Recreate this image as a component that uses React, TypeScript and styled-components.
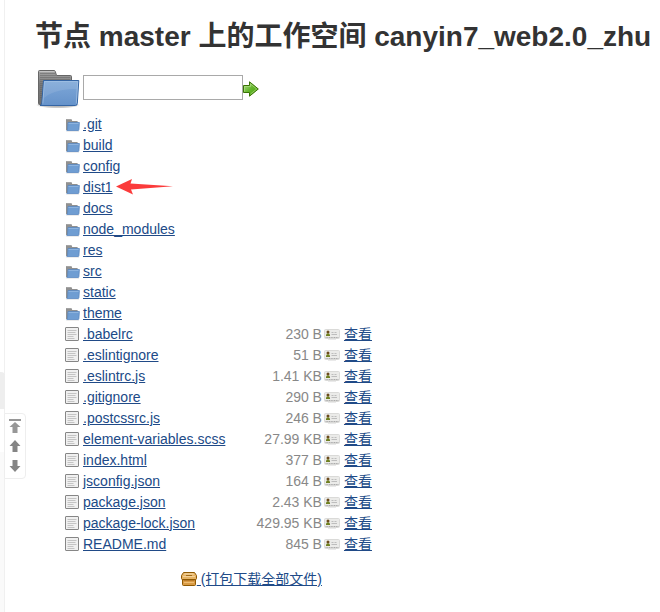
import React from "react";
import styled, { createGlobalStyle } from "styled-components";

const GlobalStyle = createGlobalStyle`
  *, *::before, *::after { box-sizing: border-box; }
  body {
    margin: 0;
    background: #fff;
    color: #333;
    font: 14px/20px "Liberation Sans", Arial, "Noto Sans CJK SC", sans-serif;
  }
`;

const Page = styled.div`
  display: flex;
  min-height: 100vh;
`;

const Rail = styled.aside`
  position: relative;
  flex: none;
  display: flex;
  flex-direction: column;
  width: 5px;
  padding-top: 372px;
  border-right: 1px solid #f0f0f0;
`;

const RailHandle = styled.div`
  height: 37px;
  margin-right: -1px;
  border-radius: 0 4px 0 0;
  background: #eee;
`;

const RailTrack = styled.div`
  flex: 1;
  margin-top: 43px;
  background: #fafafa;
`;

const ScrollDock = styled.nav`
  position: absolute;
  top: 413px;
  left: 4px;
  display: flex;
  flex-direction: column;
  align-items: center;
  width: 22px;
  padding: 2px 0;
  border: 1px solid #eee;
  border-radius: 0 4px 4px 0;
  background: #fff;
`;

const DockButton = styled.button`
  display: grid;
  place-items: center;
  width: 20px;
  height: 20px;
  padding: 0;
  border: 0;
  background: none;
  color: #858585;
`;

const Main = styled.main`
  flex: 1;
  min-width: 0;
  padding: 17px 0 22px 30px;
`;

const Title = styled.h1`
  margin: 0;
  font-size: 28px;
  line-height: 40px;
  font-weight: 700;
  white-space: nowrap;
`;

const PathForm = styled.form`
  display: flex;
  align-items: flex-start;
  margin-top: 7px;
  height: 48px;
`;

const PathInput = styled.input`
  width: 160px;
  height: 25px;
  margin: 11px 0 0;
  border: 1px solid #a9a9a9;
  padding: 1px 2px;
  font: inherit;
`;

const GoButton = styled.button`
  display: flex;
  margin: 17px 0 0;
  padding: 0;
  border: 0;
  background: none;
`;

const FileTable = styled.table`
  margin: 1px 0 0 30px;
  width: 307px;
  border-collapse: collapse;
  table-layout: fixed;
`;

const IconCol = styled.col`
  width: 18px;
`;

const SizeCol = styled.col`
  width: 80px;
`;

const ViewCol = styled.col`
  width: 50px;
`;

const Cell = styled.td<{ $align?: "right" }>`
  position: relative;
  height: 21px;
  padding: 0;
  line-height: 20px;
  text-align: ${(p) => p.$align ?? "left"};
  white-space: nowrap;
  vertical-align: middle;
`;

const SizeCell = styled(Cell)`
  color: #888;
`;

const FooterCell = styled(Cell)`
  padding-top: 15px;
`;

const Link = styled.a`
  color: #204a87;
  text-decoration: underline;
`;

const IconLink = styled(Link)`
  svg { vertical-align: -3px; }
`;

const ViewGroup = styled.span`
  display: flex;
  align-items: center;
  gap: 4px;
  padding-left: 2px;
`;

const Icon = styled.svg`
  display: block;
  flex: none;
`;

const InlineIcon = styled.svg`
  display: inline-block;
`;

const Pointer = styled.svg`
  position: absolute;
  top: 3px;
  left: 33px;
`;

const LargeFolder = () => (
  <Icon width="48" height="48" viewBox="0 0 48 48" aria-hidden="true">
    <defs>
      <linearGradient id="lfBack" x1="0" y1="0" x2="0" y2="1">
        <stop offset="0" stopColor="#a8a8a8" />
        <stop offset=".4" stopColor="#7b7b7b" />
        <stop offset="1" stopColor="#6e6e6e" />
      </linearGradient>
      <linearGradient id="lfFront" x1="0" y1="0" x2="0" y2="1">
        <stop offset="0" stopColor="#7fa8d8" />
        <stop offset="1" stopColor="#6592ca" />
      </linearGradient>
      <radialGradient id="lfShade">
        <stop offset="0" stopColor="#000" stopOpacity=".4" />
        <stop offset=".75" stopColor="#000" stopOpacity=".2" />
        <stop offset="1" stopColor="#000" stopOpacity="0" />
      </radialGradient>
    </defs>
    <ellipse cx="23" cy="41" rx="22" ry="3.500" fill="url(#lfShade)" />
    <path d="M3.500 7.500Q3.500 6.500 4.500 6.500H19Q20 6.500 20.300 7.500L21.500 11.500H35.500Q36.500 11.500 36.500 12.500V40.500H4.500Q3.500 40.500 3.500 39.500Z" fill="url(#lfBack)" stroke="#666" />
    <path d="M4.500 7.500H19.500" stroke="#c4c4c4" />
    <path d="M5 9.500H20M5 11.500H21M5 13.500H35M5 15.500H35M5 17.500H8M5 19.500H8M5 21.500H8M5 23.500H8M5 25.500H8M5 27.500H8M5 29.500H8M5 31.500H7M5 33.500H7" stroke="#626262" opacity=".5" />
    <path d="M8.500 16.500H43.800L42.300 39.500Q42.200 41.500 40.500 41.500H5Q6.500 41 6.800 39Z" fill="url(#lfFront)" stroke="#3465a4" />
    <path d="M7.800 39.500L9.500 17.500H42.700L41.300 39.500" fill="none" stroke="#a9c6e7" opacity=".7" />
    <path d="M10 18H42.200L41.700 25C32 25 18 26 9 34Z" fill="#fff" opacity=".1" />
  </Icon>
);

const FolderIcon = () => (
  <Icon width="16" height="16" viewBox="0 0 16 16" aria-hidden="true">
    <path d="M1 3.500Q1 3 1.500 3H6Q6.500 3 6.700 3.500L7.200 5H12.200Q12.700 5 12.700 5.500V14H1Z" fill="#909090" />
    <path d="M1.500 3.500H6" stroke="#a9a9a9" strokeWidth=".8" />
    <path d="M3 6.500H14.400L13.900 13.700Q13.900 14.500 13.200 14.500H1.700Q2.400 14.200 2.500 13.400Z" fill="#6f9dd2" stroke="#5a88c0" strokeWidth=".8" />
    <path d="M3.500 7.500H13.500" stroke="#8db3de" />
    <path d="M1.500 15.300H14" stroke="#000" strokeWidth=".6" opacity=".15" />
  </Icon>
);

const TextIcon = () => (
  <Icon width="16" height="16" viewBox="0 0 16 16" aria-hidden="true">
    <rect x=".5" y="1.500" width="13" height="13" rx=".5" fill="#f0f0f0" stroke="#868686" />
    <path d="M2.500 4.500H11.500M2.500 6.500H10.500M2.500 8.500H11.500M2.500 10.500H8.500M2.500 12.500H9.500" stroke="#c4c4c4" />
  </Icon>
);

const CardIcon = () => (
  <Icon width="16" height="16" viewBox="0 0 16 16" aria-hidden="true">
    <rect x=".5" y="3.500" width="15" height="9" rx="1" fill="#ebebe9" stroke="#dadad8" />
    <path d="M1.500 11.500H14.500" stroke="#aaa" strokeDasharray="1.200 .5" />
    <circle cx="4" cy="6" r="1.500" fill="#6b4a1c" />
    <path d="M2 10V9Q2.300 7.200 4 7.200T6 9V10Z" fill="#6f8020" />
    <path d="M7.500 6.500H9.500M10.500 6.500H12.500M7.500 8.500H13" stroke="#bdbdbd" />
    <path d="M4 13.500H12" stroke="#000" opacity=".08" />
  </Icon>
);

const GoIcon = () => (
  <Icon width="16" height="16" viewBox="0 0 16 16" aria-hidden="true">
    <defs>
      <linearGradient id="goFill" x1="0" y1="0" x2="1" y2="1">
        <stop offset="0" stopColor="#b6df91" />
        <stop offset=".5" stopColor="#64b52b" />
        <stop offset="1" stopColor="#4aa30c" />
      </linearGradient>
    </defs>
    <path d="M.5 4.500H6.500V.8L15.300 8L6.500 15.200V11.500H.5Z" fill="url(#goFill)" stroke="#3a7304" />
    <path d="M1.500 10.500V5.500H7.500V3L13.700 8L7.500 13" fill="none" stroke="#b5e08d" opacity=".6" />
  </Icon>
);

const PackageIcon = () => (
  <InlineIcon width="16" height="16" viewBox="0 0 16 16" aria-hidden="true">
    <path d="M1.500 7.500H14.500V13.500Q14.500 14.500 13.500 14.500H2.500Q1.500 14.500 1.500 13.500Z" fill="#d99b45" stroke="#8f5902" />
    <path d="M2.500 1.500H13.500L15.500 4.500V7.500Q15.500 8.500 14.500 8.500H1.500Q.5 8.500 .5 7.500V4.500Z" fill="#e6b364" stroke="#8f5902" />
    <path d="M2.500 3.500L4 2.500H12L13.500 3.500Z" fill="#f6dfb2" />
    <path d="M2 5.500H14" stroke="#f4d298" />
    <path d="M5 4.500H11" stroke="#a36c1a" />
    <path d="M2.500 9.500H13.500" stroke="#b87a2a" />
    <path d="M3 11.500H13" stroke="#edbd75" />
  </InlineIcon>
);

const DockIcon = ({ kind }: { kind: "top" | "up" | "down" }) => (
  <Icon width="12" height="16" viewBox="0 0 12 16" fill="currentColor" aria-hidden="true">
    {kind === "top" && <path d="M0 1H12V3H0ZM6 4L11.500 9H8.500V15H3.500V9H.5Z" opacity=".85" />}
    {kind === "up" && <path d="M6 2L11.500 8H8.500V14H3.500V8H.5Z" />}
    {kind === "down" && <path d="M6 14L11.500 8H8.500V2H3.500V8H.5Z" />}
  </Icon>
);

const folders = [".git", "build", "config", "dist1", "docs", "node_modules", "res", "src", "static", "theme"];

const files: [string, string][] = [
  [".babelrc", "230 B"],
  [".eslintignore", "51 B"],
  [".eslintrc.js", "1.41 KB"],
  [".gitignore", "290 B"],
  [".postcssrc.js", "246 B"],
  ["element-variables.scss", "27.99 KB"],
  ["index.html", "377 B"],
  ["jsconfig.json", "164 B"],
  ["package.json", "2.43 KB"],
  ["package-lock.json", "429.95 KB"],
  ["README.md", "845 B"],
];

export default function App() {
  return (
    <>
      <GlobalStyle />
      <Page>
        <Rail>
          <RailHandle />
          <RailTrack />
          <ScrollDock aria-label="Scroll">
            <DockButton type="button" aria-label="Top"><DockIcon kind="top" /></DockButton>
            <DockButton type="button" aria-label="Up"><DockIcon kind="up" /></DockButton>
            <DockButton type="button" aria-label="Down"><DockIcon kind="down" /></DockButton>
          </ScrollDock>
        </Rail>
        <Main>
          <Title>节点 master 上的工作空间 canyin7_web2.0_zhu</Title>
          <PathForm onSubmit={(e) => e.preventDefault()}>
            <LargeFolder />
            <PathInput type="text" aria-label="Path" />
            <GoButton type="submit" aria-label="Go"><GoIcon /></GoButton>
          </PathForm>
          <FileTable>
            <colgroup><IconCol /><col /><SizeCol /><ViewCol /></colgroup>
            <tbody>
              {folders.map((name) => (
                <tr key={name}>
                  <Cell><FolderIcon /></Cell>
                  <Cell colSpan={3}>
                    <Link href="#">{name}</Link>
                    {name === "dist1" && (
                      <Pointer width="58" height="16" viewBox="0 0 58 16" aria-hidden="true">
                        <path d="M0 7.500L16 0L14.500 4.500L57 7.300L15 10.500L17 15.500Z" fill="#fb3b3b" />
                      </Pointer>
                    )}
                  </Cell>
                </tr>
              ))}
              {files.map(([name, size]) => (
                <tr key={name}>
                  <Cell><TextIcon /></Cell>
                  <Cell><Link href="#">{name}</Link></Cell>
                  <SizeCell $align="right">{size}</SizeCell>
                  <Cell><ViewGroup><CardIcon /><Link href="#">查看</Link></ViewGroup></Cell>
                </tr>
              ))}
              <tr>
                <FooterCell colSpan={3} $align="right">
                  <IconLink href="#"><PackageIcon /> (打包下载全部文件)</IconLink>
                </FooterCell>
                <FooterCell />
              </tr>
            </tbody>
          </FileTable>
        </Main>
      </Page>
    </>
  );
}
